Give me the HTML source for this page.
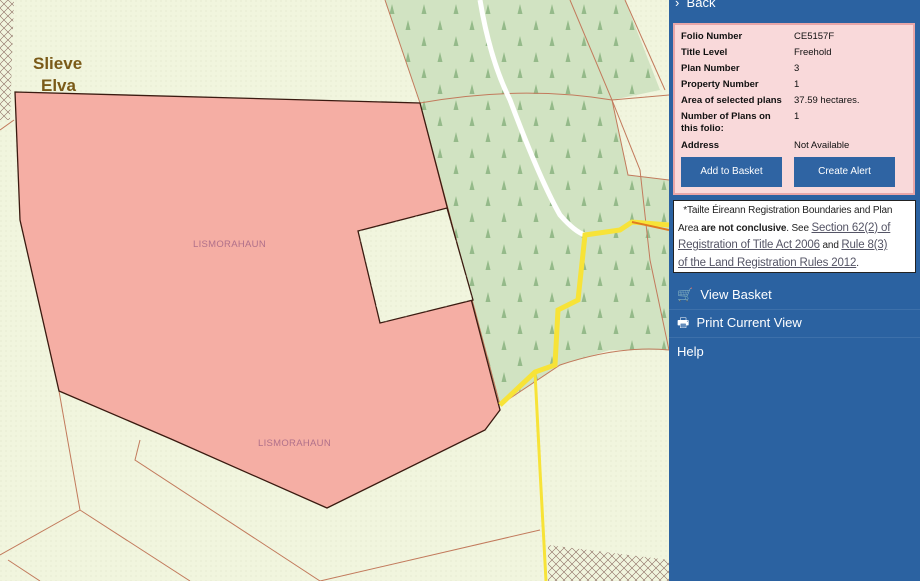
<!DOCTYPE html>
<html><head><meta charset="utf-8"><style>
body{margin:0;width:920px;height:581px;overflow:hidden;position:relative;font-family:"Liberation Sans",sans-serif;background:#f1f5de}
svg{position:absolute;left:0;top:0}
#panel{position:absolute;left:669px;top:0;width:251px;height:581px;background:#2b62a1;color:#fff}
.info{position:absolute;left:4px;top:23px;width:238px;height:168px;background:#f9d9da;border:2px solid #e8a6a8;font-size:9.5px;color:#111;white-space:nowrap}
.row{position:absolute;left:6px;width:230px}
.row b{font-weight:bold}
.v{position:absolute;left:113px;top:0}
.btn{position:absolute;top:132px;height:30px;width:101px;background:#2f64a3;color:#fff;font-size:10px;text-align:center;line-height:30px}
.note{position:absolute;left:4px;top:200px;width:243px;height:73px;background:#fff;border:1px solid #222;font-size:10px;line-height:16.5px;color:#222;padding:2px 4px;box-sizing:border-box;white-space:nowrap;letter-spacing:-0.15px}
.note u{color:#556;font-size:11.5px}
.nav{position:absolute;left:0;width:251px;height:28px;border-bottom:1px solid #3d70aa;font-size:13px;line-height:28px}
</style></head><body>
<svg width="669" height="581" viewBox="0 0 669 581">
<defs><pattern id="dots" width="5" height="5" patternUnits="userSpaceOnUse"><circle cx="1" cy="1" r="0.5" fill="#d8dcc0"/></pattern>
<pattern id="trees" width="32" height="32" patternUnits="userSpaceOnUse"><path d="M8 4 l-2.5 10 h5z M24 20 l-2.5 10 h5z" fill="#95ba8a"/></pattern>
<pattern id="hatch" width="8" height="8" patternUnits="userSpaceOnUse"><path d="M0 8 L8 0 M0 0 L8 8" stroke="#8a6a60" stroke-width="0.6"/></pattern></defs>
<rect width="669" height="581" fill="url(#dots)"/>
<polygon points="385,0 625,0 660,90 612,100 628,175 669,180 669,350 610,350 560,365 500,405 420,103" fill="#d1e3c2"/>
<polygon points="385,0 625,0 660,90 612,100 628,175 669,180 669,350 610,350 560,365 500,405 420,103" fill="url(#trees)"/>
<polygon points="0,0 14,0 10,120 0,120" fill="url(#hatch)"/>
<polygon points="548,545 669,560 669,581 548,581" fill="url(#hatch)"/>
<g fill="none" stroke="#c27a5c" stroke-width="1">
<path d="M385,0 L420,103 L500,405"/><path d="M420,103 Q520,85 612,100 L669,95"/><path d="M570,0 L612,100 L628,175 L669,180"/><path d="M625,0 L665,90"/>
<path d="M500,405 L560,365 Q620,345 669,350"/><path d="M612,100 L640,170 L650,260 L669,350"/>
<path d="M59,391 L80,510 L0,555"/><path d="M140,440 L135,460 L320,581"/><path d="M80,510 L190,581"/><path d="M320,581 L540,530"/><path d="M8,560 L40,581"/><path d="M14,120 L0,130"/>
</g>
<path d="M480,0 Q490,60 510,100 Q540,180 560,215 Q575,232 585,235" fill="none" stroke="#fff" stroke-width="5"/>
<polygon points="15,92 420,103 500,410 485,430 327,508 171,439 59,391 20,220" fill="#f5aea4" stroke="#3a1a10" stroke-width="1.3"/>
<polygon points="358,231 447,208 473,300 380,323" fill="#f1f5de" stroke="#3a1a10" stroke-width="1.3"/>
<polygon points="358,231 447,208 473,300 380,323" fill="url(#dots)"/>
<path d="M669,225 L632,222 L620,230 L585,235 L578,300 L558,310 L555,365 L535,372 L500,405" fill="none" stroke="#f7e338" stroke-width="5"/>
<path d="M632,222 L669,230" stroke="#e07a20" stroke-width="2"/>
<path d="M535,372 L540,470 L546,581" fill="none" stroke="#f7e338" stroke-width="3"/>
<text x="33" y="69" font-size="17" font-weight="bold" fill="#7a5a18">Slieve</text>
<text x="41" y="91" font-size="17" font-weight="bold" fill="#7a5a18">Elva</text>
<text x="193" y="247" font-size="9.5" fill="#b0708a" letter-spacing="0.3">LISMORAHAUN</text>
<text x="258" y="446" font-size="9.5" fill="#b0708a" letter-spacing="0.3">LISMORAHAUN</text>
</svg>
<div id="panel">
<div style="position:absolute;left:6px;top:-5px;font-size:13px">›&nbsp; Back</div>
<div class="info">
<div class="row" style="top:6px"><b>Folio Number</b><span class="v">CE5157F</span></div>
<div class="row" style="top:22px"><b>Title Level</b><span class="v">Freehold</span></div>
<div class="row" style="top:38px"><b>Plan Number</b><span class="v">3</span></div>
<div class="row" style="top:54px"><b>Property Number</b><span class="v">1</span></div>
<div class="row" style="top:70px"><b>Area of selected plans</b><span class="v">37.59 hectares.</span></div>
<div class="row" style="top:86px;line-height:12px"><b>Number of Plans on<br>this folio:</b><span class="v">1</span></div>
<div class="row" style="top:115px"><b>Address</b><span class="v">Not Available</span></div>
<div class="btn" style="left:6px">Add to Basket</div>
<div class="btn" style="left:119px">Create Alert</div>
</div>
<div class="note">&nbsp;&nbsp;*Tailte Éireann Registration Boundaries and Plan<br>Area <b>are not conclusive</b>. See <u>Section 62(2) of</u><br><u>Registration of Title Act 2006</u> and <u>Rule 8(3)</u><br><u>of the Land Registration Rules 2012</u>.</div>
<div class="nav" style="top:281px;padding-left:8px">🛒&nbsp; View Basket</div>
<div class="nav" style="top:309px;padding-left:8px">🖶&nbsp; Print Current View</div>
<div class="nav" style="top:338px;padding-left:8px;border:none">Help</div>
</div>
</body></html>
